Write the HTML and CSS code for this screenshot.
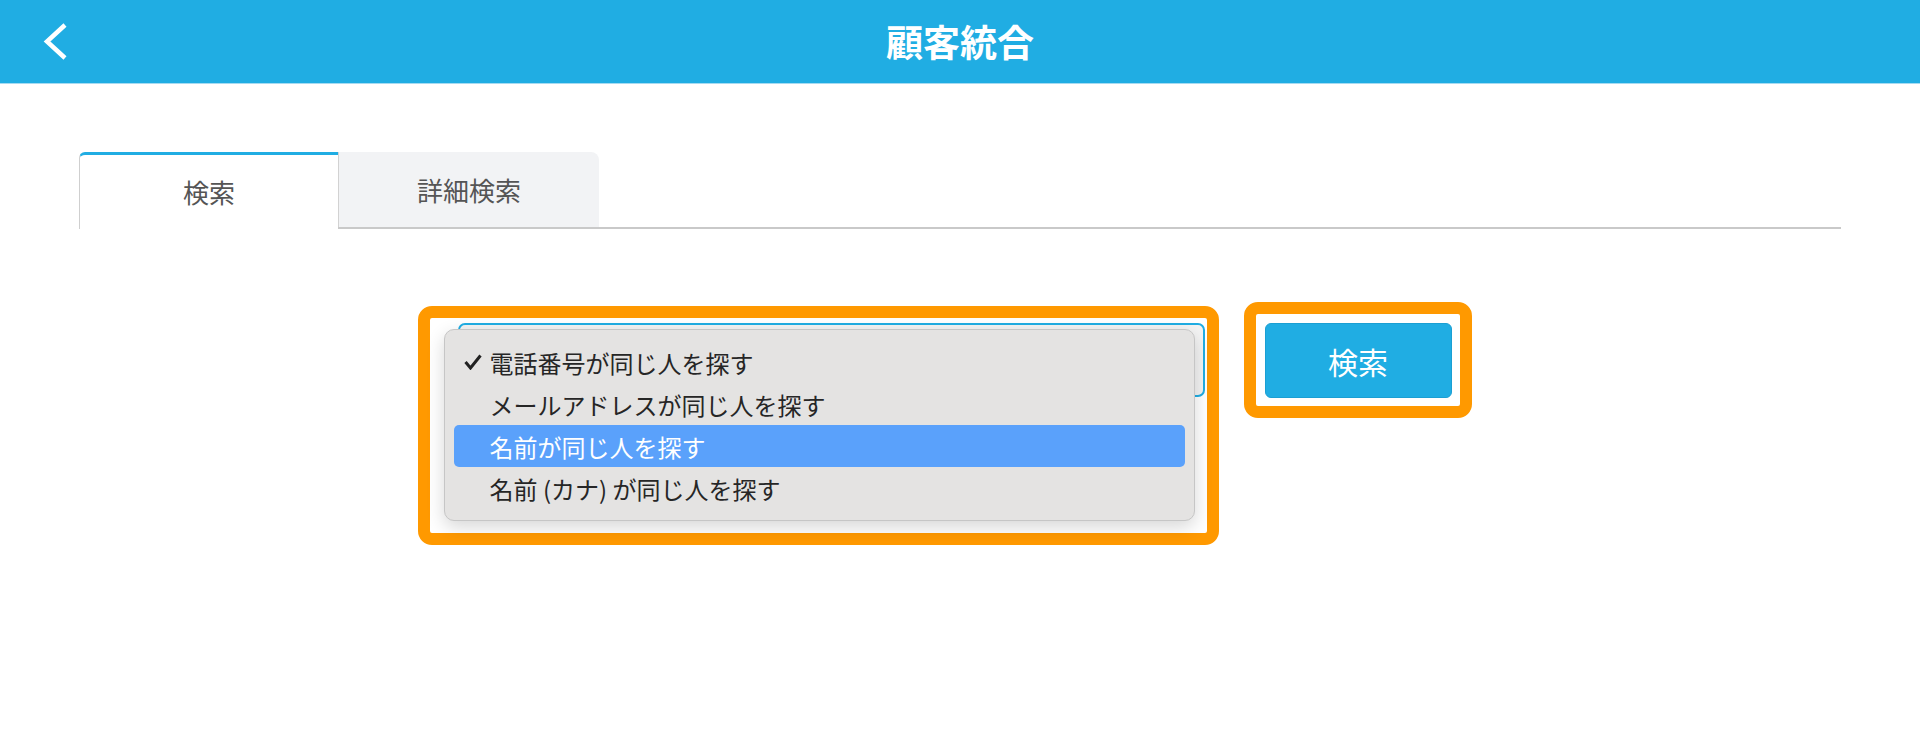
FILE: index.html
```html
<!DOCTYPE html>
<html lang="ja">
<head>
    <meta charset="UTF-8">
    <meta name="viewport" content="width=device-width, initial-scale=1.0">
    <title>顧客統合</title>
    <link rel="stylesheet" href="styles.css">
</head>
<body>

    <header class="app-header">
        <button class="back-btn" aria-label="戻る">
            <svg width="30" height="40" viewBox="0 0 30 40">
                <path d="M25 3 L7 19.5 L25 36" fill="none" stroke="#fff" stroke-width="4.5"/>
            </svg>
        </button>
        <h1 class="app-title">顧客統合</h1>
        <div></div>
    </header>

    <main class="content">
        <div class="tabs">
            <div class="tab active">検索</div>
            <div class="tab">詳細検索</div>
        </div>

        <div class="search-row">
            <div class="highlight select-highlight">
                <div class="select-wrap">
                    <div class="select-box"></div>
                    <ul class="select-menu">
                        <li class="option">
                            <span class="check-slot">
                                <svg width="18" height="16" viewBox="0 0 18 16">
                                    <path d="M1.5 8 L6.5 14 L16.5 1.5" fill="none" stroke="#222" stroke-width="3"/>
                                </svg>
                            </span>
                            電話番号が同じ人を探す
                        </li>
                        <li class="option"><span class="check-slot"></span>メールアドレスが同じ人を探す</li>
                        <li class="option selected"><span class="check-slot"></span>名前が同じ人を探す</li>
                        <li class="option"><span class="check-slot"></span>名前 (カナ) が同じ人を探す</li>
                    </ul>
                </div>
            </div>

            <div class="highlight button-highlight">
                <button class="search-btn">検索</button>
            </div>
        </div>
    </main>

</body>
</html>
```

FILE: styles.css
```css
* {
    box-sizing: border-box;
}

body {
    margin: 0;
    font-family: "Noto Sans CJK JP", "Noto Sans", sans-serif;
    background-color: #fff;
}

.app-header {
    display: grid;
    grid-template-columns: 1fr auto 1fr;
    align-items: center;
    height: 84px;
    background-color: #20ade3;
    border-bottom: 1px solid #a6dbf2;
}

.back-btn {
    justify-self: start;
    margin-left: 40px;
    padding: 0;
    border: none;
    background: none;
    display: flex;
    cursor: pointer;
}

.app-title {
    margin: 0;
    color: #fff;
    font-size: 37px;
    font-weight: bold;
    line-height: 1;
}

.content {
    padding: 68px 79px 0 79px;
}

/* tabs */
.tabs {
    display: flex;
    align-items: flex-start;
    height: 77px;
    border-bottom: 2px solid #c9c9c9;
}

.tab {
    display: flex;
    align-items: center;
    justify-content: center;
    font-size: 26px;
    color: #555;
}

.tab.active {
    width: 259px;
    height: 77px;
    padding-bottom: 2px;
    background-color: #fff;
    border-top: 3px solid #20ade3;
    border-left: 1px solid #cfcfcf;
    border-radius: 6px 0 0 0;
}

.tab:not(.active) {
    width: 261px;
    height: 75px;
    background-color: #f2f3f5;
    border-left: 1px solid #d2d2d2;
    border-radius: 0 8px 0 0;
}

/* search row */
.search-row {
    display: flex;
    justify-content: center;
    align-items: flex-start;
    gap: 25px;
    margin-top: 73px;
    padding-right: 31px;
}

.highlight {
    border: 12px solid #ff9900;
    border-radius: 14px;
    background-color: #fff;
}

.select-highlight {
    width: 801px;
    height: 239px;
    margin-top: 4px;
    padding: 5px 2px 0 28px;
}

.select-wrap {
    position: relative;
    width: 747px;
    height: 74px;
}

.select-box {
    height: 74px;
    border: 2px solid #20ade3;
    border-radius: 7px;
    background-color: #f3f3f3;
}

.select-menu {
    position: absolute;
    left: -14px;
    top: 6px;
    width: 751px;
    height: 192px;
    margin: 0;
    padding: 11px 9px;
    list-style: none;
    background-color: #e4e3e2;
    border: 1px solid #c6c6c6;
    border-radius: 10px;
    box-shadow: 0 6px 18px rgba(0, 0, 0, 0.16);
}

.option {
    display: flex;
    align-items: center;
    height: 42px;
    padding-left: 10px;
    font-size: 24px;
    color: #262626;
    border-radius: 5px;
}

.option.selected {
    background-color: #5aa1fb;
    color: #fff;
}

.check-slot {
    display: flex;
    align-items: center;
    width: 26px;
    flex-shrink: 0;
}

.button-highlight {
    width: 228px;
    height: 116px;
    padding: 9px 8px 8px 9px;
}

.search-btn {
    width: 100%;
    height: 100%;
    background-color: #20ade3;
    border: 1px solid #1b9fd3;
    border-radius: 6px;
    color: #fff;
    font-family: inherit;
    font-size: 30px;
    cursor: pointer;
}
```
